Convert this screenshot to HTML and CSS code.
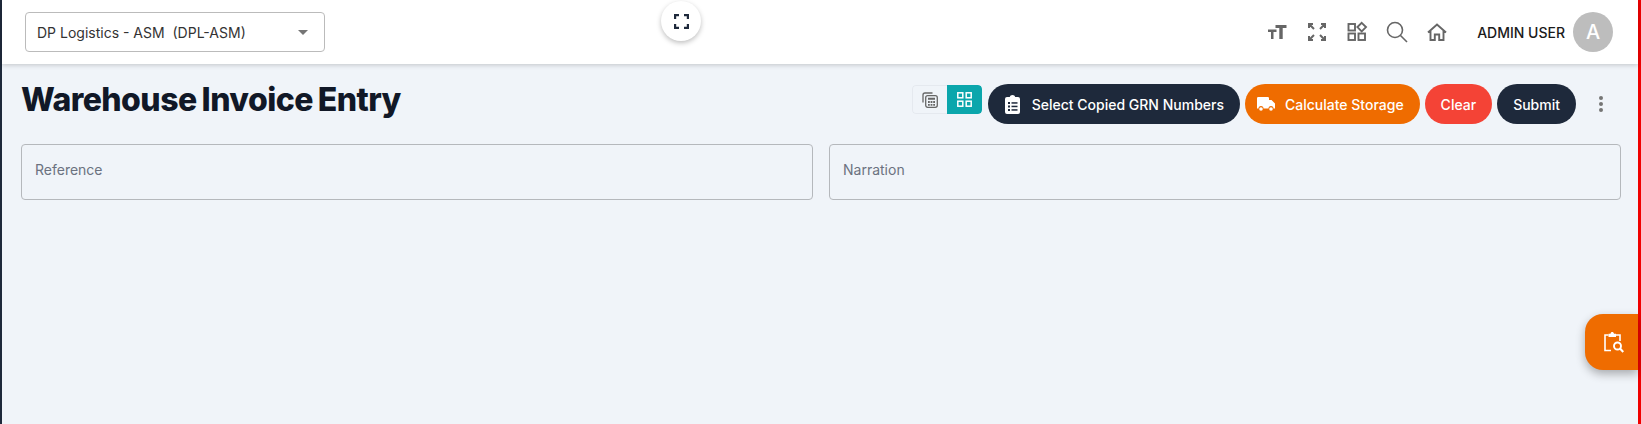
FILE: index.html
```html
<!DOCTYPE html>
<html lang="en">
<head>
    <meta charset="UTF-8">
    <meta name="viewport" content="width=device-width, initial-scale=1.0">
    <title>Warehouse Invoice Entry</title>
    <link rel="stylesheet" href="styles.css">
</head>
<body>
    <div class="app">
        <header class="topbar">
            <div class="company-select">
                <span>DP Logistics - ASM&nbsp; (DPL-ASM)</span>
                <span class="caret"></span>
            </div>
            <button class="focus-btn" aria-label="Focus mode">
                <svg width="15" height="15" viewBox="0 0 15 15" fill="none" stroke="#1e293b" stroke-width="2.2"><path d="M1.100 5V1.100H5M10 1.100H13.900V5M13.900 10V13.900H10M5 13.900H1.100V10"/></svg>
            </button>
            <div class="top-actions">
                <svg width="24" height="24" viewBox="0 0 24 24" fill="#666"><path d="M10.500 5H21.500V8H17.700V19H14.300V8H10.500Z"/><path d="M3 9.500H11.500V12H8.500V19H6V12H3Z"/></svg>
                <svg width="24" height="24" viewBox="0 0 24 24" fill="none" stroke="#666" stroke-width="2"><path d="M4 8V4H8M4.300 4.300L9 9M20 8V4H16M19.700 4.300L15 9M4 16V20H8M4.300 19.700L9 15M20 16V20H16M19.700 19.700L15 15"/></svg>
                <svg width="24" height="24" viewBox="0 0 24 24" fill="none" stroke="#666" stroke-width="1.900"><rect x="3.500" y="4" width="6.500" height="6.500"/><rect x="3.500" y="13.500" width="6.500" height="6.500"/><rect x="13.500" y="13.500" width="6.500" height="6.500"/><path d="M16.700 2.800L21 7.100L16.700 11.400L12.400 7.100Z"/></svg>
                <svg width="24" height="24" viewBox="0 0 24 24" fill="none" stroke="#666" stroke-width="1.600"><circle cx="10" cy="10" r="7.500"/><path d="M15.500 15.500L22 22"/></svg>
                <svg width="24" height="24" viewBox="0 0 24 24" fill="none" stroke="#666" stroke-width="1.900"><path d="M3 12.500L12 4.500L21 12.500M5.500 11V20H9.800V14.500H14.200V20H18.500V11"/></svg>
            </div>
            <div class="user-box">
                <span class="user-name">ADMIN USER</span>
                <span class="avatar">A</span>
            </div>
        </header>

        <main class="content">
            <div class="title-row">
                <h1>Warehouse Invoice Entry</h1>
                <div class="toolbar">
                    <div class="view-toggle">
                        <span class="view-btn">
                            <svg width="16" height="16" viewBox="0 0 16 16" fill="none" stroke="#666" stroke-width="1.300"><path d="M1 10.500V3A2 2 0 0 1 3 1H10.500"/><rect x="3.700" y="3.700" width="11.600" height="11.600" rx="2"/><path d="M6 6.700H13" stroke-width="2"/><path d="M6 10H7.800M8.600 10H10.400M11.200 10H13M6 12.800H7.800M8.600 12.800H10.400M11.200 12.800H13" stroke-width="1.800"/></svg>
                        </span>
                        <span class="view-btn active">
                            <svg width="15" height="15" viewBox="0 0 15 15" fill="none" stroke="#fff" stroke-width="1.500"><rect x="0.800" y="0.800" width="5" height="5"/><rect x="9.200" y="0.800" width="5" height="5"/><rect x="0.800" y="9.200" width="5" height="5"/><rect x="9.200" y="9.200" width="5" height="5"/></svg>
                        </span>
                    </div>
                    <button class="btn btn-dark btn-grn">
                        <svg width="15" height="19" viewBox="0 0 15 19" fill="#fff"><path d="M2 2H4.800C5 0.800 6.100 0 7.500 0S10 0.800 10.200 2H13A2 2 0 0 1 15 4V17A2 2 0 0 1 13 19H2A2 2 0 0 1 0 17V4A2 2 0 0 1 2 2Z"/><g fill="#1e293b"><rect x="3" y="7" width="2" height="2"/><rect x="6.500" y="7.200" width="6" height="1.500"/><rect x="3" y="10.500" width="2" height="2"/><rect x="6.500" y="10.700" width="6" height="1.500"/><rect x="3" y="14" width="2" height="2"/><rect x="6.500" y="14.200" width="6" height="1.500"/></g></svg>
                        Select Copied GRN Numbers
                    </button>
                    <button class="btn btn-orange btn-storage">
                        <svg width="18" height="14" viewBox="0 0 18 14" fill="#fff"><path d="M0 1.200A1.200 1.200 0 0 1 1.200 0H10.800A1.200 1.200 0 0 1 12 1.200V3H14.500L18 6.500V11.500H16.500A2.500 2.500 0 0 0 11.500 11.500H6.500A2.500 2.500 0 0 0 1.500 11.500H0Z"/><circle cx="4" cy="12" r="1.800"/><circle cx="14" cy="12" r="1.800"/></svg>
                        Calculate Storage
                    </button>
                    <button class="btn btn-red">Clear</button>
                    <button class="btn btn-dark">Submit</button>
                    <span class="more-dots"><i></i><i></i><i></i></span>
                </div>
            </div>

            <div class="form-grid">
                <div class="field">Reference</div>
                <div class="field">Narration</div>
            </div>
        </main>

        <button class="float-btn" aria-label="Search clipboard">
            <svg width="20" height="22" viewBox="0 0 20 22" fill="none" stroke="#fff" stroke-width="1.600"><path d="M7 19.500H1V4H4.500M11.500 4H16V10"/><path d="M4.500 6V2.800H6.500C6.700 1.500 7.300 1 8.200 1S9.800 1.500 10 2.800H12V6Z" fill="#fff" stroke="none"/><circle cx="13.500" cy="15" r="3.500" stroke-width="1.900"/><path d="M16 17.500L19.300 21" stroke-width="2.200"/></svg>
        </button>
    </div>
</body>
</html>
```

FILE: styles.css
```css
* {
    box-sizing: border-box;
}
html, body {
    height: 100%;
}
body {
    margin: 0;
    font-family: Inter, "Liberation Sans", sans-serif;
    background-color: #f0f4f9;
    color: #111827;
    overflow: hidden;
}
.app {
    position: relative;
    height: 424px;
    border-left: 2px solid #1e293b;
    border-right: 3px solid #f00000;
    background-color: #f0f4f9;
}
.topbar {
    position: relative;
    display: flex;
    align-items: center;
    height: 64px;
    padding: 0 23px;
    background-color: #fff;
    box-shadow: 0 1px 5px rgba(0, 0, 0, 0.2);
}
.company-select {
    display: flex;
    align-items: center;
    justify-content: space-between;
    width: 300px;
    height: 40px;
    padding: 0 16px 0 11px;
    border: 1px solid #bbb;
    border-radius: 4px;
    font-size: 14px;
    color: #333;
}
.caret {
    width: 0;
    height: 0;
    border-left: 5px solid transparent;
    border-right: 5px solid transparent;
    border-top: 5px solid #757575;
}
.focus-btn {
    position: absolute;
    top: 1px;
    left: 659px;
    display: flex;
    align-items: center;
    justify-content: center;
    width: 40px;
    height: 40px;
    padding: 0;
    border: none;
    border-radius: 50%;
    background-color: #fff;
    box-shadow: 0 2px 5px rgba(0, 0, 0, 0.25);
}
.top-actions {
    display: flex;
    align-items: center;
    gap: 16px;
    margin-left: auto;
}
.user-box {
    display: flex;
    align-items: center;
    gap: 8px;
    margin-left: 28px;
    margin-right: 2px;
}
.user-name {
    font-size: 14px;
    font-weight: 500;
    color: #1a1a1a;
}
.avatar {
    display: flex;
    align-items: center;
    justify-content: center;
    width: 40px;
    height: 40px;
    border-radius: 50%;
    background-color: #bdbdbd;
    color: #fff;
    font-size: 20px;
    font-weight: 500;
}
.content {
    padding: 20px 17px 0 19px;
}
.title-row {
    display: flex;
    align-items: flex-start;
    justify-content: space-between;
}
h1 {
    margin: 0;
    font-size: 32px;
    line-height: 32px;
    font-weight: 800;
    letter-spacing: -0.55px;
    word-spacing: -1.5px;
    color: #111827;
}
.toolbar {
    display: flex;
    align-items: flex-start;
    gap: 5px;
}
.view-toggle {
    display: flex;
    height: 29px;
    margin-top: 1px;
    margin-right: 1px;
    border-radius: 4px;
    overflow: hidden;
}
.view-btn {
    display: flex;
    align-items: center;
    justify-content: center;
    width: 35px;
    border: 1px solid #e5e9ef;
    border-right: none;
    border-radius: 4px 0 0 4px;
}
.view-btn.active {
    background-color: #0ba6ac;
    border: none;
    border-radius: 0 4px 4px 0;
}
.btn {
    display: flex;
    align-items: center;
    height: 40px;
    padding: 0 16px;
    border: none;
    border-radius: 20px;
    font-family: inherit;
    font-size: 14px;
    font-weight: 500;
    color: #fff;
    white-space: nowrap;
}
.btn-grn {
    gap: 12px;
    padding-left: 17px;
}
.btn-storage {
    gap: 10px;
    padding-left: 12px;
}
.btn-dark {
    background-color: #1e293b;
}
.btn-orange {
    background-color: #ef6c00;
}
.btn-red {
    background-color: #f44336;
    padding: 0 16px;
}
.more-dots {
    display: flex;
    flex-direction: column;
    align-items: center;
    justify-content: center;
    gap: 2px;
    width: 40px;
    height: 40px;
}
.more-dots i {
    width: 4px;
    height: 4px;
    border-radius: 50%;
    background-color: #757575;
}
.form-grid {
    display: grid;
    grid-template-columns: 1fr 1fr;
    gap: 16px;
    margin-top: 20px;
}
.field {
    display: flex;
    align-items: center;
    height: 56px;
    padding: 0 13px 5px;
    border: 1px solid #b5b8bc;
    border-radius: 4px;
    font-size: 14px;
    color: #6b7280;
}
.float-btn {
    position: absolute;
    top: 314px;
    right: 0;
    display: flex;
    align-items: center;
    justify-content: center;
    width: 53px;
    height: 56px;
    padding: 0 0 0 5px;
    border: none;
    border-radius: 18px 0 0 18px;
    background-color: #ef6c00;
    box-shadow: 0 4px 10px rgba(0, 0, 0, 0.3);
}
```
